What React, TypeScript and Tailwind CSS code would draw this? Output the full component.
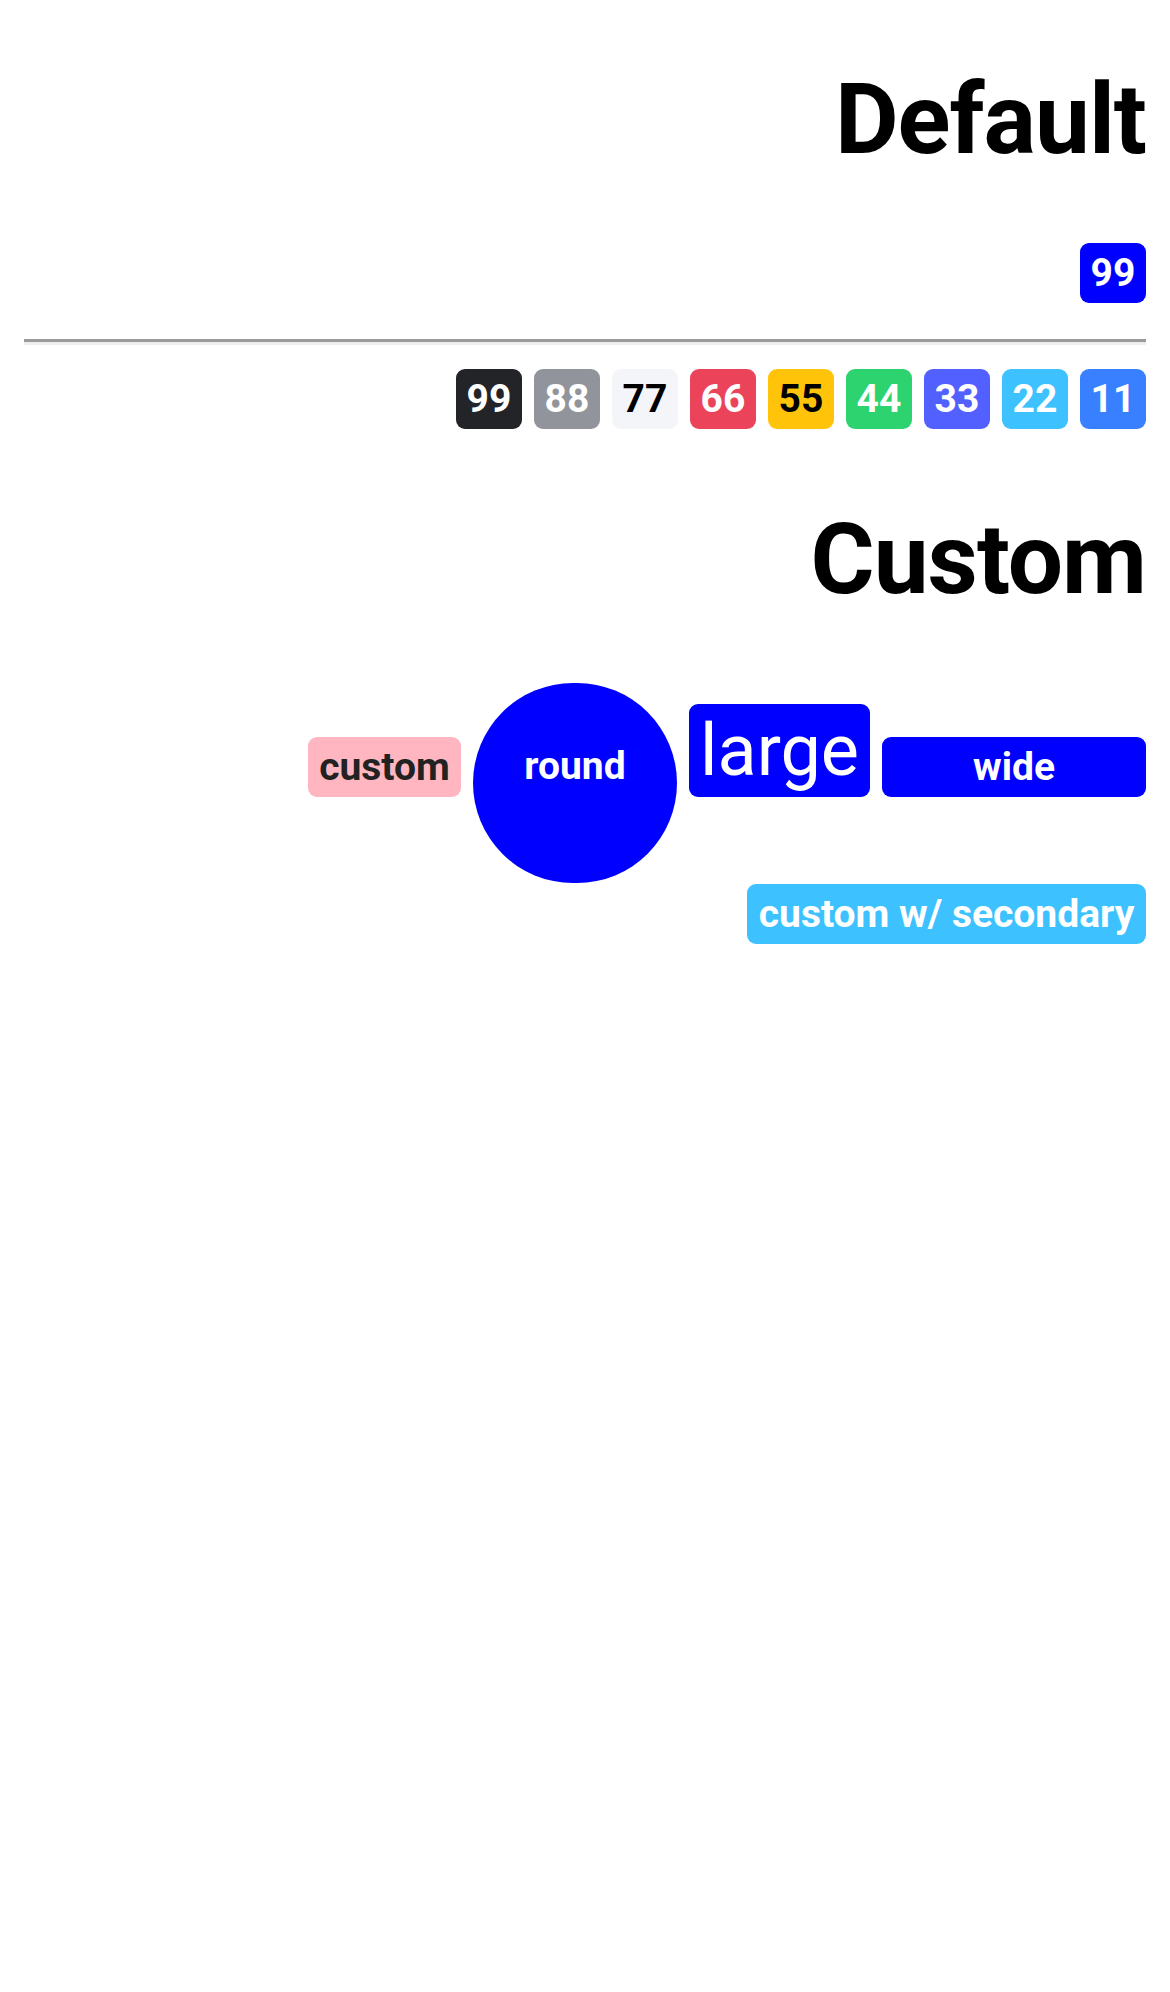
import React from 'react';

interface Swatch {
  label: string;
  bg: string;
  fg: string;
}

const swatches: Swatch[] = [
  { label: '99', bg: 'bg-[#222428]', fg: 'text-white' },
  { label: '88', bg: 'bg-[#92949c]', fg: 'text-white' },
  { label: '77', bg: 'bg-[#f4f5f8]', fg: 'text-black' },
  { label: '66', bg: 'bg-[#eb445a]', fg: 'text-white' },
  { label: '55', bg: 'bg-[#ffc409]', fg: 'text-black' },
  { label: '44', bg: 'bg-[#2dd36f]', fg: 'text-white' },
  { label: '33', bg: 'bg-[#5260ff]', fg: 'text-white' },
  { label: '22', bg: 'bg-[#3dc2ff]', fg: 'text-white' },
  { label: '11', bg: 'bg-[#3880ff]', fg: 'text-white' },
];

const badgeBase =
  'flex items-center justify-center h-[60px] rounded-[9px] text-[39px] font-bold leading-none';

const App: React.FC = () => {
  return (
    <div className="min-h-[1992px] bg-white px-[24px] font-['Roboto',sans-serif] text-black">
      <h1 className="pt-[71px] h-[168px] text-right text-[98px] font-bold leading-none tracking-[-1px]">Default</h1>

      <div className="mt-[75px] flex justify-end">
        <span className={`${badgeBase} w-[66px] bg-[#0000ff] text-white`}>99</span>
      </div>

      <hr className="mt-[36px] border-0 border-t-[3px] border-b-[3px] border-t-[#9a9a9a] border-b-[#eeeeee]" />

      <div className="mt-[24px] flex justify-end gap-[12px]">
        {swatches.map(s => (
          <span key={s.label} className={`${badgeBase} w-[66px] ${s.bg} ${s.fg}`}>
            {s.label}
          </span>
        ))}
      </div>

      <h1 className="mt-[82px] h-[97px] text-right text-[98px] font-bold leading-none tracking-[-1px]">Custom</h1>

      <div className="mt-[75px] flex items-start justify-end gap-[12px]">
        <span className={`${badgeBase} mt-[54px] w-[153px] bg-[#ffb6c1] text-[#222222]`}>custom</span>
        <span className="w-[204px] h-[200px] rounded-full bg-[#0000ff] pt-[64px] text-center text-[39px] font-bold leading-none text-white">
          round
        </span>
        <span className="mt-[21px] flex h-[93px] w-[181px] items-center justify-center rounded-[9px] bg-[#0000ff] text-[72px] font-normal leading-none text-white">
          large
        </span>
        <span className={`${badgeBase} mt-[54px] w-[264px] bg-[#0000ff] text-white`}>wide</span>
      </div>

      <div className="mt-[1px] flex justify-end">
        <span className={`${badgeBase} w-[399px] bg-[#3dc2ff] text-white`}>custom w/ secondary</span>
      </div>
    </div>
  );
};

export default App;
